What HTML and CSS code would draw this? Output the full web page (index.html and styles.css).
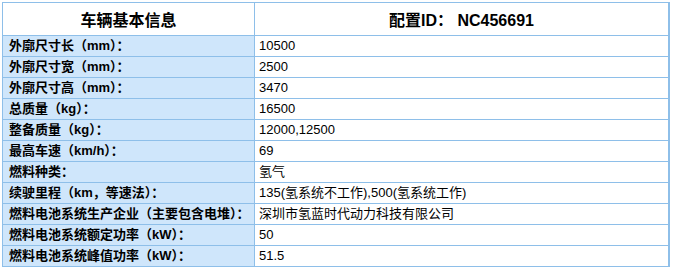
FILE: index.html
```html
<!DOCTYPE html>
<html lang="zh-CN">
<head>
<meta charset="utf-8">
<title>车辆基本信息</title>
<link rel="stylesheet" href="styles.css">
</head>
<body>
<table class="spec">
  <thead>
    <tr class="head">
      <th class="h-left">车辆基本信息</th>
      <th class="h-right">配置ID： NC456691</th>
    </tr>
  </thead>
  <tbody>
    <tr><td class="k">外廓尺寸长（mm）：</td><td class="v">10500</td></tr>
    <tr><td class="k">外廓尺寸宽（mm）：</td><td class="v">2500</td></tr>
    <tr><td class="k">外廓尺寸高（mm）：</td><td class="v">3470</td></tr>
    <tr><td class="k">总质量（kg）：</td><td class="v">16500</td></tr>
    <tr><td class="k">整备质量（kg）：</td><td class="v">12000,12500</td></tr>
    <tr><td class="k">最高车速（km/h）：</td><td class="v">69</td></tr>
    <tr><td class="k">燃料种类：</td><td class="v">氢气</td></tr>
    <tr><td class="k">续驶里程（km，等速法）：</td><td class="v">135(氢系统不工作),500(氢系统工作)</td></tr>
    <tr><td class="k">燃料电池系统生产企业（主要包含电堆）：</td><td class="v">深圳市氢蓝时代动力科技有限公司</td></tr>
    <tr><td class="k">燃料电池系统额定功率（kW）：</td><td class="v">50</td></tr>
    <tr><td class="k">燃料电池系统峰值功率（kW）：</td><td class="v">51.5</td></tr>
  </tbody>
</table>
</body>
</html>
```
FILE: styles.css
```css
html, body {
  margin: 0;
  padding: 0;
  background: #ffffff;
}
body {
  padding: 2px 0 0 2px;
  font-family: "Liberation Sans", Arial, "Noto Sans CJK SC", sans-serif;
  color: #000;
}
.spec {
  border-collapse: collapse;
  width: 668px;
  table-layout: fixed;
  border-right: 2px solid #8ebfe9;
}
.spec th, .spec td {
  border: 1px solid #8ebfe9;
  padding: 0;
}
.head th {
  height: 32px;
  font-weight: bold;
  font-size: 16px;
  text-align: center;
  vertical-align: middle;
}
.h-left {
  width: 251px;
  font-size: 17px;
}
.spec td {
  height: 20px;
  font-size: 13px;
  line-height: 20px;
  vertical-align: middle;
  white-space: nowrap;
}
.k {
  background: #cfe6fb;
  font-weight: bold;
  padding-left: 6px !important;
}
.v {
  padding-left: 4px !important;
  background: #ffffff;
}
```
